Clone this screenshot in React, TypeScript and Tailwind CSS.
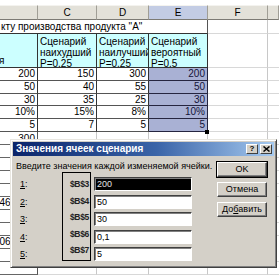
import React from "react";

const W = ["w-[38px]", "w-[59px]", "w-[52px]", "w-[59px]", "w-[60px]", "w-[11px]"];

const dataB = ["200", "50", "30", "10%", "5"];
const dataC = ["150", "40", "35", "15%", "7"];
const dataD = ["300", "55", "25", "8%", "5"];
const dataE = ["200", "50", "30", "10%", "5"];
const dataH = ["h-[13px]", "h-[13px]", "h-[12px]", "h-[13px]", "h-[13px]"];

function Sheet() {
  const lower = [
    { b: "300", kind: "top" },
    { b: "" },
    { b: "" },
    { b: "" },
    { b: "" },
    { b: "1460", kind: "left" },
    { b: "" },
    { b: "" },
    { b: "1065", kind: "left" },
    { b: "" },
    { b: "" },
  ];
  return (
    <div className="flex flex-col bg-white text-[10px] leading-none text-black" style={{ fontFamily: '"Liberation Sans", Arial, sans-serif' }}>
      <div className="h-[5px] bg-white" />
      {/* column header */}
      <div className="flex h-[15px]">
        {["", "C", "D", "E", "F", ""].map((l, i) => (
          <div
            key={i}
            className={`${W[i]} shrink-0 flex items-center justify-center border-r border-b border-r-[#a09e96] border-b-[#7c7a74] border-t border-t-[#f4f3ef] ${i === 3 ? "bg-[#c3cce4]" : "bg-[#e3e1d9]"} text-[10px]`}
          >
            {l}
          </div>
        ))}
      </div>
      {/* row 1 */}
      <div className="flex h-[14px]">
        <div className={`${W[0]} shrink-0 border-b border-b-[#333] pl-[1px] flex items-center whitespace-nowrap overflow-visible`}>
          кту производства продукта "А"
        </div>
        <div className={`${W[1]} shrink-0 border-b border-b-[#333]`} />
        <div className={`${W[2]} shrink-0 border-b border-b-[#333]`} />
        <div className={`${W[3]} shrink-0 border-b border-r border-b-[#333] border-r-[#555]`} />
        <div className={`${W[4]} shrink-0 border-b border-r border-b-[#d8d8d8] border-r-[#c8c8c8]`} />
        <div className={`${W[5]} shrink-0 border-b border-b-[#d8d8d8]`} />
      </div>
      {/* blue row */}
      <div className="flex h-[34px]">
        <div className={`${W[0]} shrink-0 bg-[#ccffff] border-r border-b border-[#333] flex items-end pb-[1px]`}>
          <span className="-ml-[1px] leading-[11px]">я</span>
        </div>
        {[
          ["Сценарий", "наихудший", "P=0,25"],
          ["Сценарий", "наилучший", "P=0,25"],
          ["Сценарий", "вероятный", "P=0,5"],
        ].map((lines, i) => (
          <div key={i} className={`${W[i + 1]} shrink-0 bg-[#ccffff] border-r border-b border-[#333] pl-[2px] pt-[2px] leading-[11px] overflow-hidden whitespace-nowrap`}>
            {lines.map((t) => (
              <div key={t}>{t}</div>
            ))}
          </div>
        ))}
        <div className={`${W[4]} shrink-0 border-r border-b border-r-[#c8c8c8] border-b-[#d8d8d8]`} />
        <div className={`${W[5]} shrink-0 border-b border-b-[#d8d8d8]`} />
      </div>
      {/* data rows */}
      {dataB.map((_, r) => (
        <div key={r} className={`flex ${dataH[r]}`}>
          {[dataB, dataC, dataD].map((col, c) => (
            <div key={c} className={`${W[c]} shrink-0 border-r border-b border-r-[#333] border-b-[#555] flex items-center justify-end pr-[2px]`}>
              {col[r]}
            </div>
          ))}
          <div className={`${W[3]} shrink-0 bg-[#a9b1d4] border-r border-b border-[#252540] flex items-center justify-end pr-[2px] text-[#14143a]`}>
            {dataE[r]}
          </div>
          <div className={`${W[4]} shrink-0 border-r border-b border-r-[#c8c8c8] border-b-[#d8d8d8] relative`}>
            {r === 4 && <div className="absolute -left-[3px] -bottom-[3px] w-[4px] h-[4px] bg-black" />}
          </div>
          <div className={`${W[5]} shrink-0 border-b border-b-[#d8d8d8]`} />
        </div>
      ))}
      {/* lower rows */}
      {lower.map((row, r) => (
        <div key={r} className="flex h-[13px]">
          <div className={`${W[0]} shrink-0 border-r border-b border-r-[#555] border-b-[#666] flex ${row.kind === "left" ? "items-center justify-start -ml-[6px] pl-0" : "items-end justify-end pr-[2px]"}`}>
            {row.b}
          </div>
          <div className={`${W[1]} shrink-0 border-r border-b border-r-[#c8c8c8] border-b-[#d8d8d8]`} />
          <div className={`${W[2]} shrink-0 border-r border-b border-r-[#c8c8c8] border-b-[#d8d8d8]`} />
          <div className={`${W[3]} shrink-0 border-r border-b border-r-[#c8c8c8] border-b-[#d8d8d8]`} />
          <div className={`${W[4]} shrink-0 border-r border-b border-r-[#c8c8c8] border-b-[#d8d8d8]`} />
          <div className={`${W[5]} shrink-0 border-b border-b-[#d8d8d8]`} />
        </div>
      ))}
    </div>
  );
}

function Btn({ children, def }: { children: React.ReactNode; def?: boolean }) {
  return (
    <div className={`${def ? "border border-black" : "border border-transparent"} w-[52px] h-[17px]`}>
      <div className="w-full h-full bg-[#d4d0c8] border border-t-white border-l-white border-r-[#404040] border-b-[#404040] shadow-[inset_-1px_-1px_0_#808080] flex items-center justify-center text-[9px] text-black">
        {children}
      </div>
    </div>
  );
}

function Dialog() {
  const rows = [
    ["1", "$B$3", "200"],
    ["2", "$B$4", "50"],
    ["3", "$B$5", "30"],
    ["4", "$B$6", "0,1"],
    ["5", "$B$7", "5"],
  ];
  return (
    <div
      className="absolute left-[10px] top-[139px] w-[267px] h-[129px] bg-[#d4d0c8] border border-t-[#e8e6e0] border-l-[#e8e6e0] border-r-[#404040] border-b-[#404040] shadow-[inset_1px_1px_0_#fff,inset_-1px_-1px_0_#808080] p-[2px] flex flex-col"
      style={{ fontFamily: '"Liberation Sans", Arial, sans-serif' }}
    >
      <div className="h-[14px] shrink-0 bg-[linear-gradient(to_right,#0a246a,#3a64a8_55%,#a6caf0)] flex items-center justify-between pl-[3px] pr-[2px]">
        <span className="text-white font-bold text-[10px] leading-none">Значения ячеек сценария</span>
        <div className="flex gap-[2px]">
          <div className="w-[12px] h-[10px] bg-[#d4d0c8] border border-t-white border-l-white border-r-[#404040] border-b-[#404040] flex items-center justify-center text-[8px] font-bold leading-none text-black">?</div>
          <div className="w-[12px] h-[10px] bg-[#d4d0c8] border border-t-white border-l-white border-r-[#404040] border-b-[#404040] flex items-center justify-center">
            <svg width="7" height="6" viewBox="0 0 7 6">
              <path d="M0.5 0.5 L6.5 5.5 M6.5 0.5 L0.5 5.5" stroke="#000" strokeWidth="1.5" />
            </svg>
          </div>
        </div>
      </div>
      <div className="flex flex-1 pl-[3px] pr-[6px]">
        <div className="flex flex-col w-[178px]">
          <div className="pt-[6px] h-[17px] text-[9px] leading-none text-black whitespace-nowrap">Введите значения каждой изменяемой ячейки.</div>
          <div className="flex mt-[-1px]">
            <div className="w-[46px] pt-[5px] pl-[4px] flex flex-col">
              {rows.map((r) => (
                <div key={r[0]} className="h-[17.5px] text-[9px] leading-[14px] text-black">
                  <span className="underline underline-offset-1">{r[0]}</span>:
                </div>
              ))}
            </div>
            <div className="w-[29px] h-[89px] border border-black pt-[4px] flex flex-col items-end pr-[1px]">
              {rows.map((r) => (
                <div key={r[1]} className="h-[17.5px] text-[8.5px] leading-[14px] text-[#222] font-bold tracking-[-0.3px]">
                  {r[1]}
                </div>
              ))}
            </div>
            <div className="pt-[5px] pl-[3px] flex flex-col">
              {rows.map((r, i) => (
                <div key={r[2]} className="h-[17.5px]">
                  <div
                    className={`w-[98px] h-[14px] border border-t-[#404040] border-l-[#404040] border-r-white border-b-white shadow-[inset_1px_1px_0_#808080] pl-[2px] text-[9px] leading-[12px] ${i === 0 ? "bg-black text-[#e0e0e0]" : "bg-white text-black"}`}
                  >
                    {r[2]}
                  </div>
                </div>
              ))}
            </div>
          </div>
        </div>
        <div className="ml-auto pt-[5px] flex flex-col gap-[3px]">
          <Btn def>OK</Btn>
          <Btn>Отмена</Btn>
          <Btn>
            До<span className="underline underline-offset-1">б</span>авить
          </Btn>
        </div>
      </div>
    </div>
  );
}

export default function App() {
  return (
    <div className="relative w-[279px] h-[276px] overflow-hidden bg-white">
      <Sheet />
      <Dialog />
    </div>
  );
}
